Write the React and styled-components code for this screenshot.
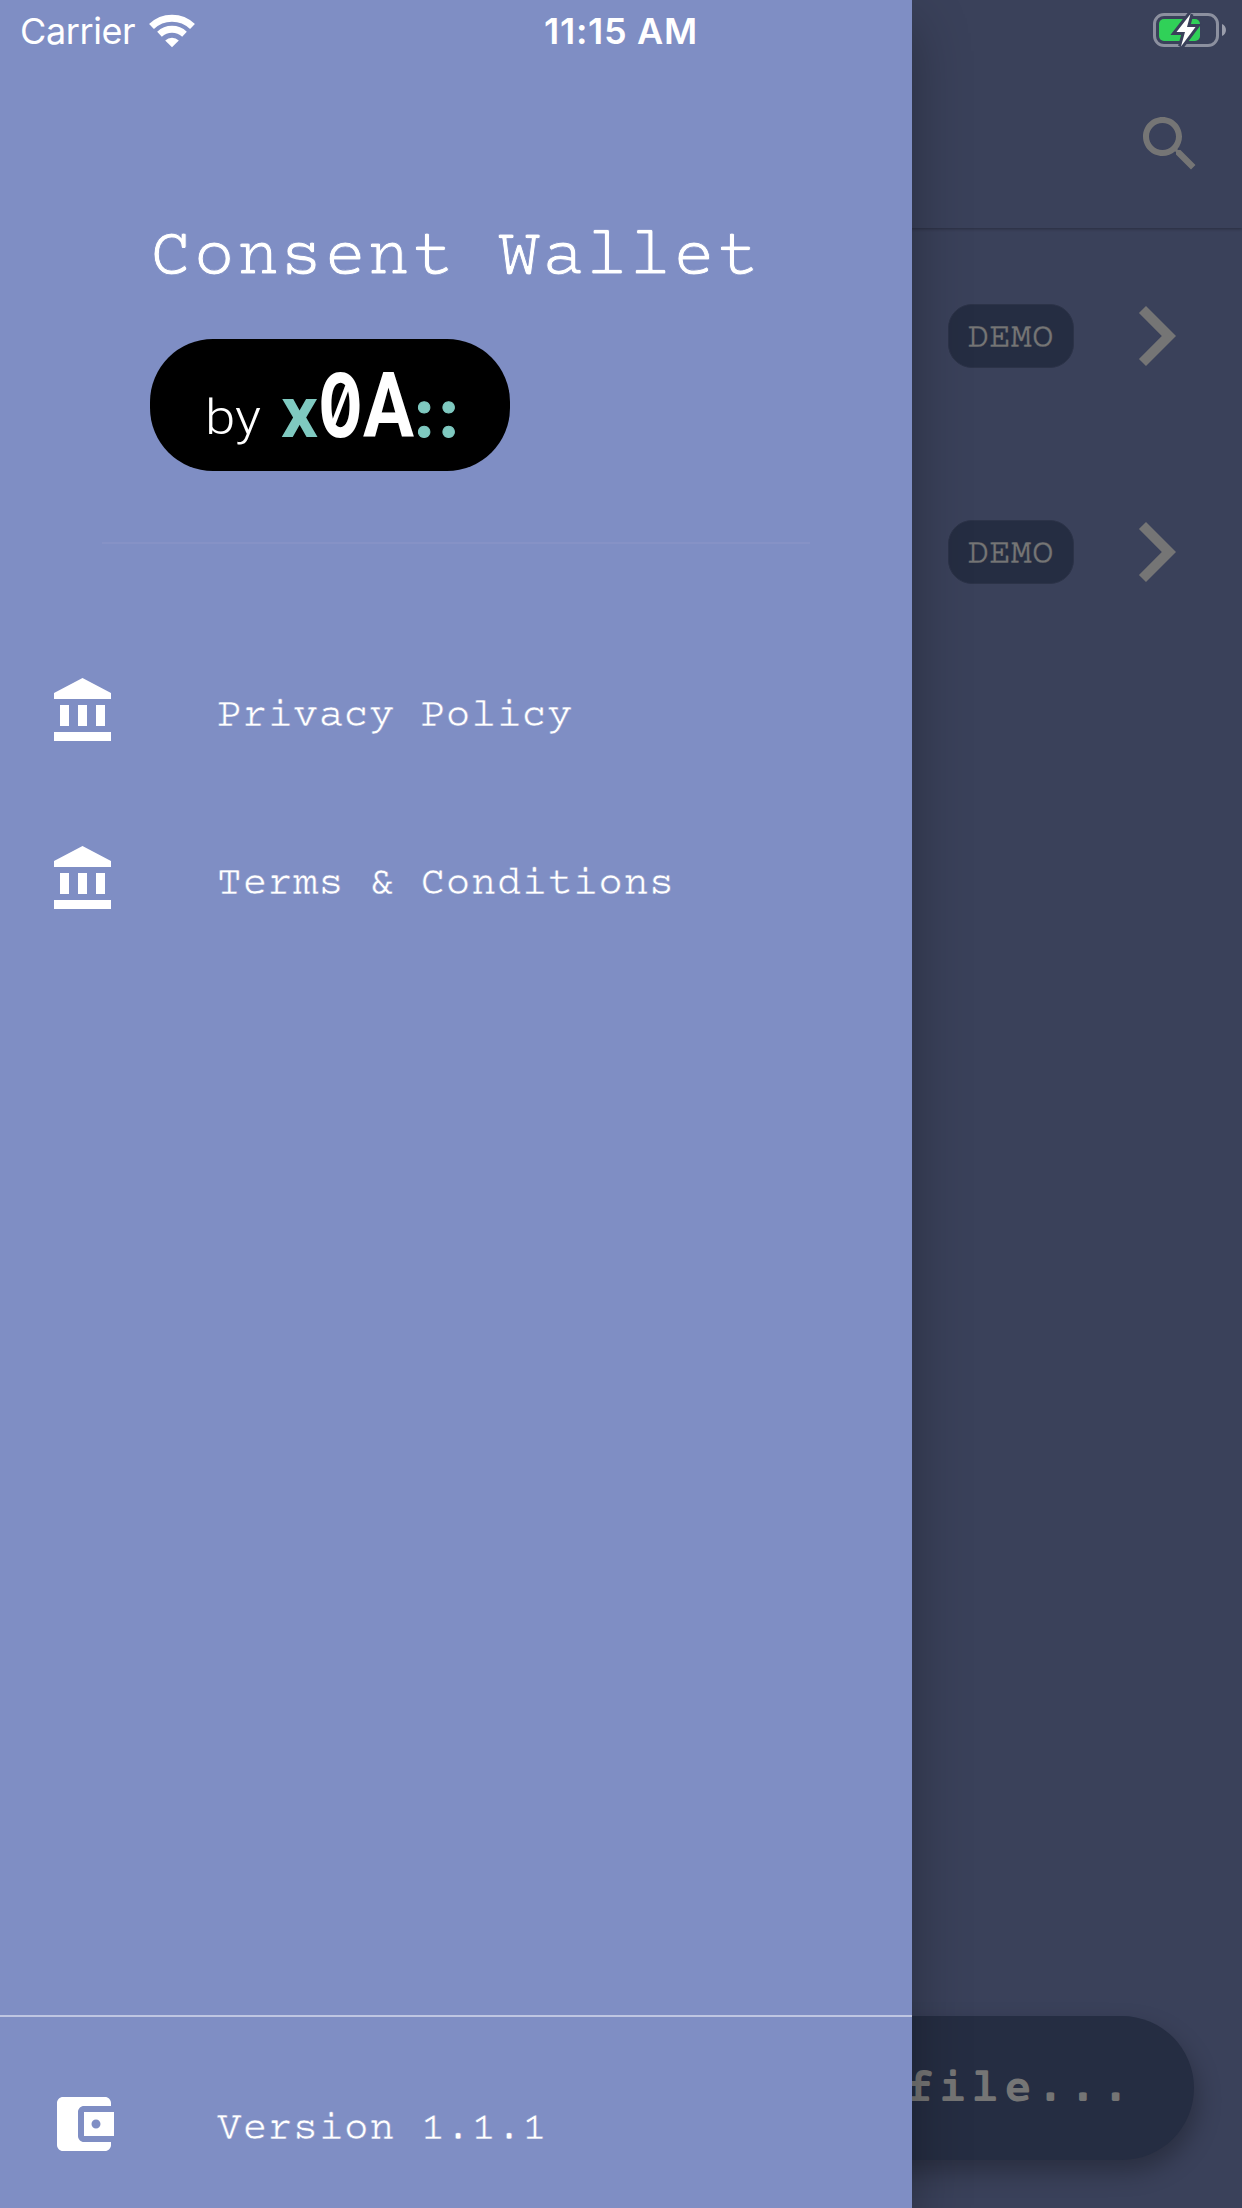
import React from "react";
import styled, { createGlobalStyle } from "styled-components";

const GlobalStyle = createGlobalStyle`
  *, *::before, *::after { box-sizing: border-box; }
  body { margin: 0; background: #3a415a; }
`;

const mono = `"Courier Prime", "Liberation Mono", monospace`;

const Screen = styled.div`
  position: relative;
  width: 1242px;
  height: 2208px;
  overflow: hidden;
  background: #3a415a;
`;

const Page = styled.main`
  display: flex;
  flex-direction: column;
  height: 100%;
  color: #757575;
`;

const AppBar = styled.header`
  display: flex;
  justify-content: flex-end;
  align-items: flex-end;
  height: 228px;
  padding: 0 36px 48px 0;
  box-shadow: 0 1px 3px rgba(0, 0, 0, 0.3);
`;

const Icon = styled.svg`
  display: block;
  flex: none;
  width: ${(p) => p.$size}px;
  height: ${(p) => p.$size}px;
  fill: currentColor;
`;

const Profiles = styled.div`
  display: flex;
  flex-direction: column;
  flex: 1;
`;

const ProfileRow = styled.div`
  display: flex;
  align-items: center;
  justify-content: flex-end;
  gap: 22px;
  height: 216px;
  padding-right: 26px;
`;

const Badge = styled.span`
  display: flex;
  align-items: center;
  justify-content: center;
  width: 126px;
  height: 64px;
  border: 1px solid #2c3348;
  border-radius: 24px;
  background: #252d42;
  padding: 5px 1px 0 0;
  font: 400 36px/40px ${mono};
  -webkit-text-stroke: 0.3px #252d42;
`;

const BottomBar = styled.div`
  display: flex;
  justify-content: flex-end;
  padding: 0 48px 48px 0;
`;

const ActionButton = styled.div`
  display: flex;
  align-items: center;
  justify-content: flex-end;
  width: 420px;
  height: 144px;
  padding: 5px 60px 0 0;
  border-radius: 72px;
  background: #252d42;
  box-shadow: 3px 12px 24px rgba(0, 0, 0, 0.28);
  font: 700 47px/54px ${mono};
  letter-spacing: 4.4px;
`;

const Drawer = styled.aside`
  position: absolute;
  inset: 0 auto 0 0;
  display: flex;
  flex-direction: column;
  width: 912px;
  background: #7f8ec4;
  color: #fff;
  box-shadow: 0 24px 54px rgba(0, 0, 0, 0.3);
`;

const DrawerHeader = styled.div`
  display: flex;
  flex-direction: column;
  align-items: flex-start;
  height: 544px;
  margin: 0 102px;
  padding: 219px 0 0 48px;
  border-bottom: 2px solid #8692c6;
`;

const Title = styled.h1`
  margin: 0;
  font: 400 69px/80px ${mono};
  letter-spacing: 2.2px;
  white-space: nowrap;
  -webkit-text-stroke: 0.9px #7f8ec4;
`;

const Brand = styled.div`
  width: 360px;
  height: 132px;
  margin-top: 40px;
  border-radius: 63px;
  background: #000;
`;

const Menu = styled.nav`
  display: flex;
  flex-direction: column;
  flex: 1;
  padding-top: 83px;
`;

const MenuItem = styled.div`
  display: flex;
  align-items: center;
  gap: 97px;
  height: 168px;
  padding-left: 48px;
`;

const MenuLabel = styled.span`
  padding-top: 12px;
  font: 400 41px/44px ${mono};
  letter-spacing: 0.84px;
  white-space: nowrap;
  -webkit-text-stroke: 0.5px #7f8ec4;
`;

const DrawerFooter = styled.footer`
  height: 193px;
  border-top: 2px solid #bfc6e2;
  padding-top: 23px;
`;

const StatusBar = styled.div`
  position: absolute;
  inset: 0 0 auto 0;
  display: grid;
  grid-template-columns: 1fr auto 1fr;
  align-items: center;
  height: 60px;
  padding: 0 15px 0 20px;
  color: #fff;
  font: 400 36px/44px Inter, "Liberation Sans", sans-serif;
`;

const Carrier = styled.div`
  display: flex;
  align-items: center;
  gap: 13px;
  padding-top: 2px;
  letter-spacing: -0.4px;
`;

const Clock = styled.div`
  padding-top: 2px;
  margin-right: 5px;
  font-weight: 600;
  letter-spacing: 0.7px;
`;

const BatterySlot = styled.div`
  display: flex;
  justify-content: flex-end;
`;

const SearchIcon = () => (
  <Icon $size={72} viewBox="0 0 24 24">
    <path d="M15.5 14h-.79l-.28-.27C15.41 12.59 16 11.11 16 9.5 16 5.91 13.09 3 9.5 3S3 5.91 3 9.5 5.91 16 9.5 16c1.61 0 3.09-.59 4.23-1.57l.27.28v.79l5 4.99L20.49 19l-4.99-5zm-6 0C7.01 14 5 11.99 5 9.5S7.01 5 9.5 5 14 7.01 14 9.5 11.99 14 9.5 14z" />
  </Icon>
);

const ChevronIcon = () => (
  <Icon $size={120} viewBox="0 0 24 24">
    <path d="M10 6L8.59 7.41 13.17 12l-4.58 4.59L10 18l6-6z" />
  </Icon>
);

const BankIcon = () => (
  <Icon $size={72} viewBox="0 0 24 24">
    <path d="M4 10v7h3v-7H4zm6 0v7h3v-7h-3zM2 22h19v-3H2v3zm14-12v7h3v-7h-3zm-4.5-9L2 6v2h19V6l-9.500-5z" />
  </Icon>
);

const WalletIcon = () => (
  <Icon $size={72} viewBox="0 0 24 24">
    <path d="M21 18v1c0 1.100-.9 2-2 2H5c-1.110 0-2-.9-2-2V5c0-1.100.89-2 2-2h14c1.100 0 2 .9 2 2v1h-9c-1.110 0-2 .9-2 2v8c0 1.100.89 2 2 2h9zm-9-2h10V8H12v8zm4-2.500c-.83 0-1.500-.67-1.500-1.500s.67-1.500 1.500-1.500 1.500.67 1.500 1.500-.67 1.500-1.500 1.500z" />
  </Icon>
);

const WifiIcon = () => (
  <svg width="48" height="34" viewBox="148 13 48 34" fill="none">
    <path d="M151.500 25.500a29.500 29.500 0 0 1 41 0" stroke="#fff" strokeWidth="7" />
    <path d="M159.500 33.200a18.300 18.300 0 0 1 25 0" stroke="#fff" strokeWidth="6.800" />
    <path d="M172 46.300l-6.800-6.800a10 10 0 0 1 13.600 0z" fill="#fff" />
  </svg>
);

const BatteryIcon = () => (
  <svg width="75" height="36" viewBox="1152 12 75 36">
    <rect x="1154.500" y="14.500" width="63" height="31" rx="9.500" fill="none" stroke="#8c909f" strokeWidth="3" />
    <path d="M1222 24c5.300 2 5.300 10 0 12z" fill="#9a9dab" />
    <rect x="1159" y="19" width="41" height="22" rx="5" fill="#30d158" />
    <path
      d="M1190.500 14L1176.500 32H1185L1181 46.500L1195.500 27H1187z"
      fill="#fff"
      stroke="#3a415a"
      strokeWidth="6"
      paintOrder="stroke"
    />
  </svg>
);

const Digit = styled.tspan`
  font-family: Inter, sans-serif;
  font-feature-settings: "zero";
`;

const BrandMark = () => (
  <svg width="360" height="132" viewBox="0 0 360 132">
    <g fontFamily="Roboto, sans-serif">
      <text x="55" y="95" fontSize="48" fontWeight="300" fill="#fff" textLength="56" lengthAdjust="spacingAndGlyphs">by</text>
      <text y="98" fontWeight="700" fontSize="91" fill="#fff">
        <tspan x="131" fontSize="73" fill="#7fc9c0" textLength="37" lengthAdjust="spacingAndGlyphs">x</tspan>
        <Digit x="168.500" fontSize="88" textLength="44" lengthAdjust="spacingAndGlyphs">0</Digit>
        <tspan x="213" textLength="51" lengthAdjust="spacingAndGlyphs">A</tspan>
        <tspan x="265 289.500" fontSize="70" fontWeight="900" fontFamily="Lato, sans-serif" fill="#7fc9c0" stroke="#7fc9c0" strokeWidth="1">::</tspan>
      </text>
    </g>
  </svg>
);

const profiles = ["first", "second"];
const links = ["Privacy Policy", "Terms & Conditions"];

export default function App() {
  return (
    <Screen>
      <GlobalStyle />
      <Page>
        <AppBar>
          <SearchIcon />
        </AppBar>
        <Profiles>
          {profiles.map((id) => (
            <ProfileRow key={id}>
              <Badge>DEMO</Badge>
              <ChevronIcon />
            </ProfileRow>
          ))}
        </Profiles>
        <BottomBar>
          <ActionButton>file...</ActionButton>
        </BottomBar>
      </Page>
      <Drawer>
        <DrawerHeader>
          <Title>Consent Wallet</Title>
          <Brand>
            <BrandMark />
          </Brand>
        </DrawerHeader>
        <Menu>
          {links.map((label) => (
            <MenuItem key={label}>
              <BankIcon />
              <MenuLabel>{label}</MenuLabel>
            </MenuItem>
          ))}
        </Menu>
        <DrawerFooter>
          <MenuItem>
            <WalletIcon />
            <MenuLabel>Version 1.1.1</MenuLabel>
          </MenuItem>
        </DrawerFooter>
      </Drawer>
      <StatusBar>
        <Carrier>
          Carrier
          <WifiIcon />
        </Carrier>
        <Clock>11:15 AM</Clock>
        <BatterySlot>
          <BatteryIcon />
        </BatterySlot>
      </StatusBar>
    </Screen>
  );
}
